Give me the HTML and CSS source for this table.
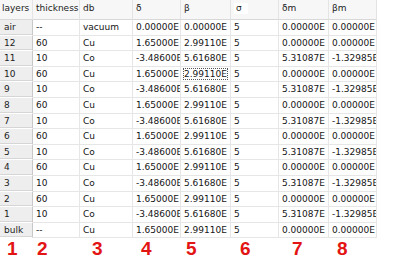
FILE: index.html
```html
<!DOCTYPE html>
<html>
<head>
<meta charset="utf-8">
<link rel="stylesheet" href="styles.css">
</head>
<body>
<div class="grid">
  <div class="hd">layers</div><div class="hd">thickness</div><div class="hd">db</div><div class="hd">δ</div><div class="hd">β</div><div class="hd"><span class="sig">σ</span></div><div class="hd">δm</div><div class="hd">βm</div>

  <div class="rh">air</div><div class="c">--</div><div class="c">vacuum</div><div class="c">0.00000E</div><div class="c">0.00000E</div><div class="c">5</div><div class="c">0.00000E</div><div class="c">0.00000E</div>
  <div class="rh">12</div><div class="c">60</div><div class="c">Cu</div><div class="c">1.65000E</div><div class="c">2.99110E</div><div class="c">5</div><div class="c">0.00000E</div><div class="c">0.00000E</div>
  <div class="rh">11</div><div class="c">10</div><div class="c">Co</div><div class="c">-3.48600E</div><div class="c">5.61680E</div><div class="c">5</div><div class="c">5.31087E</div><div class="c">-1.32985E</div>
  <div class="rh">10</div><div class="c">60</div><div class="c">Cu</div><div class="c">1.65000E</div><div class="c"><span class="focus">2.99110E</span></div><div class="c">5</div><div class="c">0.00000E</div><div class="c">0.00000E</div>
  <div class="rh">9</div><div class="c">10</div><div class="c">Co</div><div class="c">-3.48600E</div><div class="c">5.61680E</div><div class="c">5</div><div class="c">5.31087E</div><div class="c">-1.32985E</div>
  <div class="rh">8</div><div class="c">60</div><div class="c">Cu</div><div class="c">1.65000E</div><div class="c">2.99110E</div><div class="c">5</div><div class="c">0.00000E</div><div class="c">0.00000E</div>
  <div class="rh">7</div><div class="c">10</div><div class="c">Co</div><div class="c">-3.48600E</div><div class="c">5.61680E</div><div class="c">5</div><div class="c">5.31087E</div><div class="c">-1.32985E</div>
  <div class="rh">6</div><div class="c">60</div><div class="c">Cu</div><div class="c">1.65000E</div><div class="c">2.99110E</div><div class="c">5</div><div class="c">0.00000E</div><div class="c">0.00000E</div>
  <div class="rh">5</div><div class="c">10</div><div class="c">Co</div><div class="c">-3.48600E</div><div class="c">5.61680E</div><div class="c">5</div><div class="c">5.31087E</div><div class="c">-1.32985E</div>
  <div class="rh">4</div><div class="c">60</div><div class="c">Cu</div><div class="c">1.65000E</div><div class="c">2.99110E</div><div class="c">5</div><div class="c">0.00000E</div><div class="c">0.00000E</div>
  <div class="rh">3</div><div class="c">10</div><div class="c">Co</div><div class="c">-3.48600E</div><div class="c">5.61680E</div><div class="c">5</div><div class="c">5.31087E</div><div class="c">-1.32985E</div>
  <div class="rh">2</div><div class="c">60</div><div class="c">Cu</div><div class="c">1.65000E</div><div class="c">2.99110E</div><div class="c">5</div><div class="c">0.00000E</div><div class="c">0.00000E</div>
  <div class="rh">1</div><div class="c">10</div><div class="c">Co</div><div class="c">-3.48600E</div><div class="c">5.61680E</div><div class="c">5</div><div class="c">5.31087E</div><div class="c">-1.32985E</div>
  <div class="rh">bulk</div><div class="c">--</div><div class="c">Cu</div><div class="c">1.65000E</div><div class="c">2.99110E</div><div class="c">5</div><div class="c">0.00000E</div><div class="c">0.00000E</div>
</div>
<div class="nums">
  <div class="n n1">1</div><div class="n n2">2</div><div class="n n3">3</div><div class="n n4">4</div><div class="n n5">5</div><div class="n n6">6</div><div class="n n7">7</div><div class="n n8">8</div>
</div>
</body>
</html>
```

FILE: styles.css
```css
html, body {
  margin: 0;
  padding: 0;
  background: #ffffff;
}
body {
  width: 400px;
  height: 262px;
  overflow: hidden;
  font-family: "DejaVu Sans", Verdana, sans-serif;
  font-size: 9px;
  color: #151515;
}
.grid {
  display: grid;
  grid-template-columns: 33px 47px 53px 48px 50px 48px 50px 48px;
  grid-template-rows: 20px;
  grid-auto-rows: 15.6px;
  width: 377px;
}
.hd {
  background: #f7f7f7;
  border-right: 1px solid #e4e4e4;
  border-bottom: 1px solid #d8d8d8;
  padding: 3px 0 0 3px;
  white-space: nowrap;
  overflow: hidden;
  color: #222;
}
.hd:first-child {
  padding-left: 2px;
}
.sig {
  background: #ffffff;
  padding: 0 6px 1px 2px;
}
.rh {
  background: #eeeeee;
  border-right: 1px solid #c8c8c8;
  border-bottom: 1px solid #ffffff;
  box-shadow: inset 0 -1px 0 #d6d6d6;
  padding: 2px 0 0 4px;
  white-space: nowrap;
  color: #222;
}
.c {
  border-right: 1px solid #e6e6e6;
  border-bottom: 1px solid #e6e6e6;
  padding: 2px 0 0 3px;
  white-space: nowrap;
  overflow: hidden;
}
.focus {
  outline: 1px dotted #555;
  outline-offset: 0px;
}
.nums {
  display: grid;
  grid-template-columns: 33px 47px 53px 48px 50px 48px 50px 48px;
  font-family: "Liberation Sans", Arial, sans-serif;
  font-weight: bold;
  font-size: 19px;
  color: #e31414;
  line-height: 22px;
}
.n1 { padding-left: 7px; }
.n2 { padding-left: 4px; }
.n3 { padding-left: 12px; }
.n4 { padding-left: 8px; }
.n5 { padding-left: 5px; }
.n6 { padding-left: 9px; }
.n7 { padding-left: 13px; }
.n8 { padding-left: 8px; }
```
